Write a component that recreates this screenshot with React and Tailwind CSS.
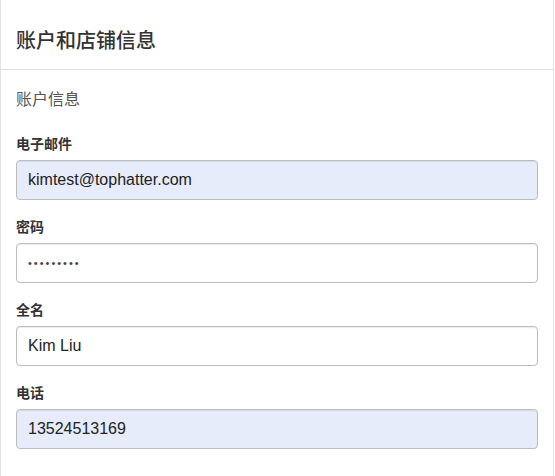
const fields = [
  { label: "电子邮件", value: "kimtest@tophatter.com", filled: true },
  { label: "密码", value: "•••••••••", filled: false, secret: true },
  { label: "全名", value: "Kim Liu", filled: false },
  { label: "电话", value: "13524513169", filled: true },
];

export default function App() {
  return (
    <div
      className="w-[554px] h-[476px] bg-white border-x border-[#e3e3e3] text-[#333]"
      style={{ fontFamily: '"Liberation Sans", Arial, "Noto Sans CJK SC", sans-serif' }}
    >
      <div className="h-[70px] border-b border-[#dedede] px-[15px] flex items-center">
        <h1 className="text-[20px] font-medium text-[#333] pt-[12px] leading-[28px]">账户和店铺信息</h1>
      </div>

      <div className="px-[15px] pt-[19px]">
        <div className="text-[16px] text-[#555] leading-[22px]">账户信息</div>

        <div className="mt-[24px] flex flex-col gap-[18px]">
          {fields.map((f) => (
            <div key={f.label}>
              <label className="block text-[14px] font-bold text-[#333] leading-[18px] mb-[7px]">
                {f.label}
              </label>
              <div
                className={
                  "h-[40px] rounded-[4px] border border-[#bdbdbd] shadow-[inset_0_1px_1px_rgba(0,0,0,0.08)] flex items-center px-[11px] " +
                  (f.filled ? "bg-[#e6ecfa]" : "bg-white")
                }
              >
                {f.secret ? (
                  <span className="text-[11px] tracking-[2px] text-[#444] leading-none">{f.value}</span>
                ) : (
                  <span className="text-[16px] text-[#222]">{f.value}</span>
                )}
              </div>
            </div>
          ))}
        </div>
      </div>
    </div>
  );
}
